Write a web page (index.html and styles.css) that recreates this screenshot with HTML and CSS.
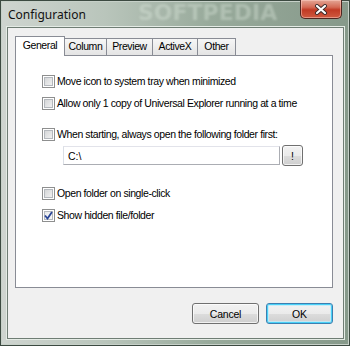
FILE: index.html
```html
<!DOCTYPE html>
<html lang="en">
<head>
  <meta charset="UTF-8" />
  <title>Configuration</title>
  <link rel="stylesheet" href="styles.css">
</head>
<body>
  <div class="window">
    <div class="titlebar">
      <span class="title">Configuration</span>
      <span class="watermark">SOFTPEDIA</span>
      <button class="close">
        <svg width="14" height="11" viewBox="0 0 14 11">
          <path d="M3 2 L11 9 M11 2 L3 9" stroke="#3a2a2a" stroke-width="4" stroke-linecap="round"/>
          <path d="M3 2 L11 9 M11 2 L3 9" stroke="#fff" stroke-width="2.2" stroke-linecap="round"/>
        </svg>
      </button>
    </div>

    <div class="client">
      <div class="tabs">
        <div class="tab tab-general active">General</div>
        <div class="tab tab-column">Column</div>
        <div class="tab tab-preview">Preview</div>
        <div class="tab tab-activex">ActiveX</div>
        <div class="tab tab-other">Other</div>
      </div>

      <div class="panel">
        <div class="option">
          <span class="check"></span>
          <span>Move icon to system tray when minimized</span>
        </div>
        <div class="option gap-s">
          <span class="check"></span>
          <span>Allow only 1 copy of Universal Explorer running at a time</span>
        </div>
        <div class="option gap-l">
          <span class="check"></span>
          <span>When starting, always open the following folder first:</span>
        </div>
        <div class="path-row">
          <input class="path" type="text" value="C:\">
          <button class="browse">!</button>
        </div>
        <div class="option gap-xl">
          <span class="check"></span>
          <span>Open folder on single-click</span>
        </div>
        <div class="option gap-s">
          <span class="check checked">
            <svg width="9" height="9" viewBox="0 0 9 9">
              <path d="M1 4.5 L3.5 7.5 L8 1" fill="none" stroke="#2a4596" stroke-width="1.8"/>
            </svg>
          </span>
          <span>Show hidden file/folder</span>
        </div>
      </div>

      <div class="actions">
        <button class="btn">Cancel</button>
        <button class="btn default">OK</button>
      </div>
    </div>
  </div>
</body>
</html>
```

FILE: styles.css
```css
body {
  margin: 0;
  padding: 0;
  font-family: "Liberation Sans", Arial, sans-serif;
  font-size: 10.5px;
  letter-spacing: -0.4px;
  color: #000;
}

.window {
  width: 350px;
  height: 346px;
  box-sizing: border-box;
  display: flex;
  flex-direction: column;
  background: linear-gradient(to right, #cfd5d0 0%, #b9c5bb 30%, #98aa9b 60%, #86998a 100%);
  box-shadow: inset 0 0 0 1px #3c4a41, inset 0 0 0 2px #c6d0c8;
  overflow: hidden;
  position: relative;
}

.titlebar {
  height: 28px;
  display: flex;
  align-items: flex-start;
  justify-content: space-between;
}

.title {
  font-family: "Noto Sans", "Liberation Sans", sans-serif;
  font-size: 12px;
  letter-spacing: 0;
  margin: 6px 0 0 8px;
  color: #111;
}

.watermark {
  position: absolute;
  left: 138px;
  top: 1px;
  line-height: 24px;
  font-family: "DejaVu Sans", sans-serif;
  font-weight: bold;
  font-size: 22px;
  letter-spacing: 0;
  color: rgba(225, 238, 226, 0.35);
  filter: blur(1px);
}

.close {
  width: 42px;
  height: 19px;
  margin-right: 8px;
  padding: 0;
  border: 1px solid #4f2620;
  border-top: none;
  border-radius: 0 0 5px 5px;
  background: linear-gradient(#e4a796 0%, #d46a55 40%, #c13a24 55%, #cf5a40 100%);
  box-shadow: inset 0 0 0 1px rgba(255, 210, 200, 0.5);
  display: flex;
  align-items: center;
  justify-content: center;
  position: relative;
  z-index: 1;
}

.client {
  flex: 1;
  margin: 0 7px 8px 8px;
  padding: 8px 10px 14px 7px;
  background: #f0f0f0;
  display: flex;
  flex-direction: column;
  box-shadow: 0 0 0 1px #6f7d74, 0 0 0 2px #e4ebe5;
}

.tabs {
  display: flex;
  align-items: flex-end;
  height: 19px;
}

.tab {
  box-sizing: border-box;
  height: 17px;
  line-height: 15px;
  text-align: center;
  border: 1px solid #898c95;
  border-bottom: none;
  background: linear-gradient(#f6f6f6, #e4e4e4);
  margin-left: -1px;
}

.tab-general { width: 50px; margin-left: 0; }
.tab-column { width: 43px; }
.tab-preview { width: 47px; }
.tab-activex { width: 46px; }
.tab-other { width: 39px; }

.tab.active {
  height: 20px;
  line-height: 17px;
  background: #fff;
  margin-bottom: -1px;
  position: relative;
  z-index: 1;
}

.panel {
  flex: 1;
  border: 1px solid #898c95;
  background: #fff;
  padding: 19px 0 0 26px;
}

.option {
  display: flex;
  align-items: center;
  gap: 2px;
  height: 13px;
  line-height: 13px;
  white-space: nowrap;
}

.gap-s { margin-top: 9px; }
.gap-l { margin-top: 18px; }
.gap-xl { margin-top: 21px; }

.check {
  width: 13px;
  height: 13px;
  box-sizing: border-box;
  border: 1px solid #8e8f8f;
  background: linear-gradient(135deg, #cdcfd1, #f8f8f8);
  box-shadow: inset 0 0 0 1px #fff, inset 0 0 0 2px #b4b8bd;
  display: flex;
  align-items: center;
  justify-content: center;
  flex-shrink: 0;
}

.check.checked {
  background: linear-gradient(135deg, #e4e6e8, #fcfcfc);
}

.path-row {
  display: flex;
  align-items: center;
  gap: 2px;
  margin: 4px 0 0 21px;
  height: 21px;
}

.path {
  width: 217px;
  height: 19px;
  box-sizing: border-box;
  border: 1px solid #abadb3;
  border-top-color: #e2e3ea;
  border-left-color: #dbdfe6;
  padding: 0 4px;
  font-family: "Liberation Sans", Arial, sans-serif;
  font-size: 10.5px;
  background: #fff;
}

.browse {
  width: 21px;
  height: 21px;
  padding: 0;
  border: 1px solid #707070;
  border-radius: 3px;
  background: linear-gradient(#f2f2f2 0%, #ebebeb 50%, #dddddd 51%, #cfcfcf 100%);
  box-shadow: inset 0 0 0 1px rgba(255, 255, 255, 0.7);
  font-family: "Liberation Sans", Arial, sans-serif;
  font-size: 10.5px;
}

.actions {
  display: flex;
  justify-content: flex-end;
  gap: 7px;
  margin-top: 15px;
}

.btn {
  width: 67px;
  height: 21px;
  padding: 0;
  border: 1px solid #707070;
  border-radius: 3px;
  background: linear-gradient(#f2f2f2 0%, #ebebeb 50%, #dddddd 51%, #cfcfcf 100%);
  box-shadow: inset 0 0 0 1px rgba(255, 255, 255, 0.7);
  font-family: "Liberation Sans", Arial, sans-serif;
  font-size: 10.5px;
  letter-spacing: -0.2px;
  color: #000;
}

.btn.default {
  border-color: #3c7fb1;
  box-shadow: inset 0 0 0 1px #48d0f7, inset 0 0 0 2px rgba(190, 235, 250, 0.8);
}
```
